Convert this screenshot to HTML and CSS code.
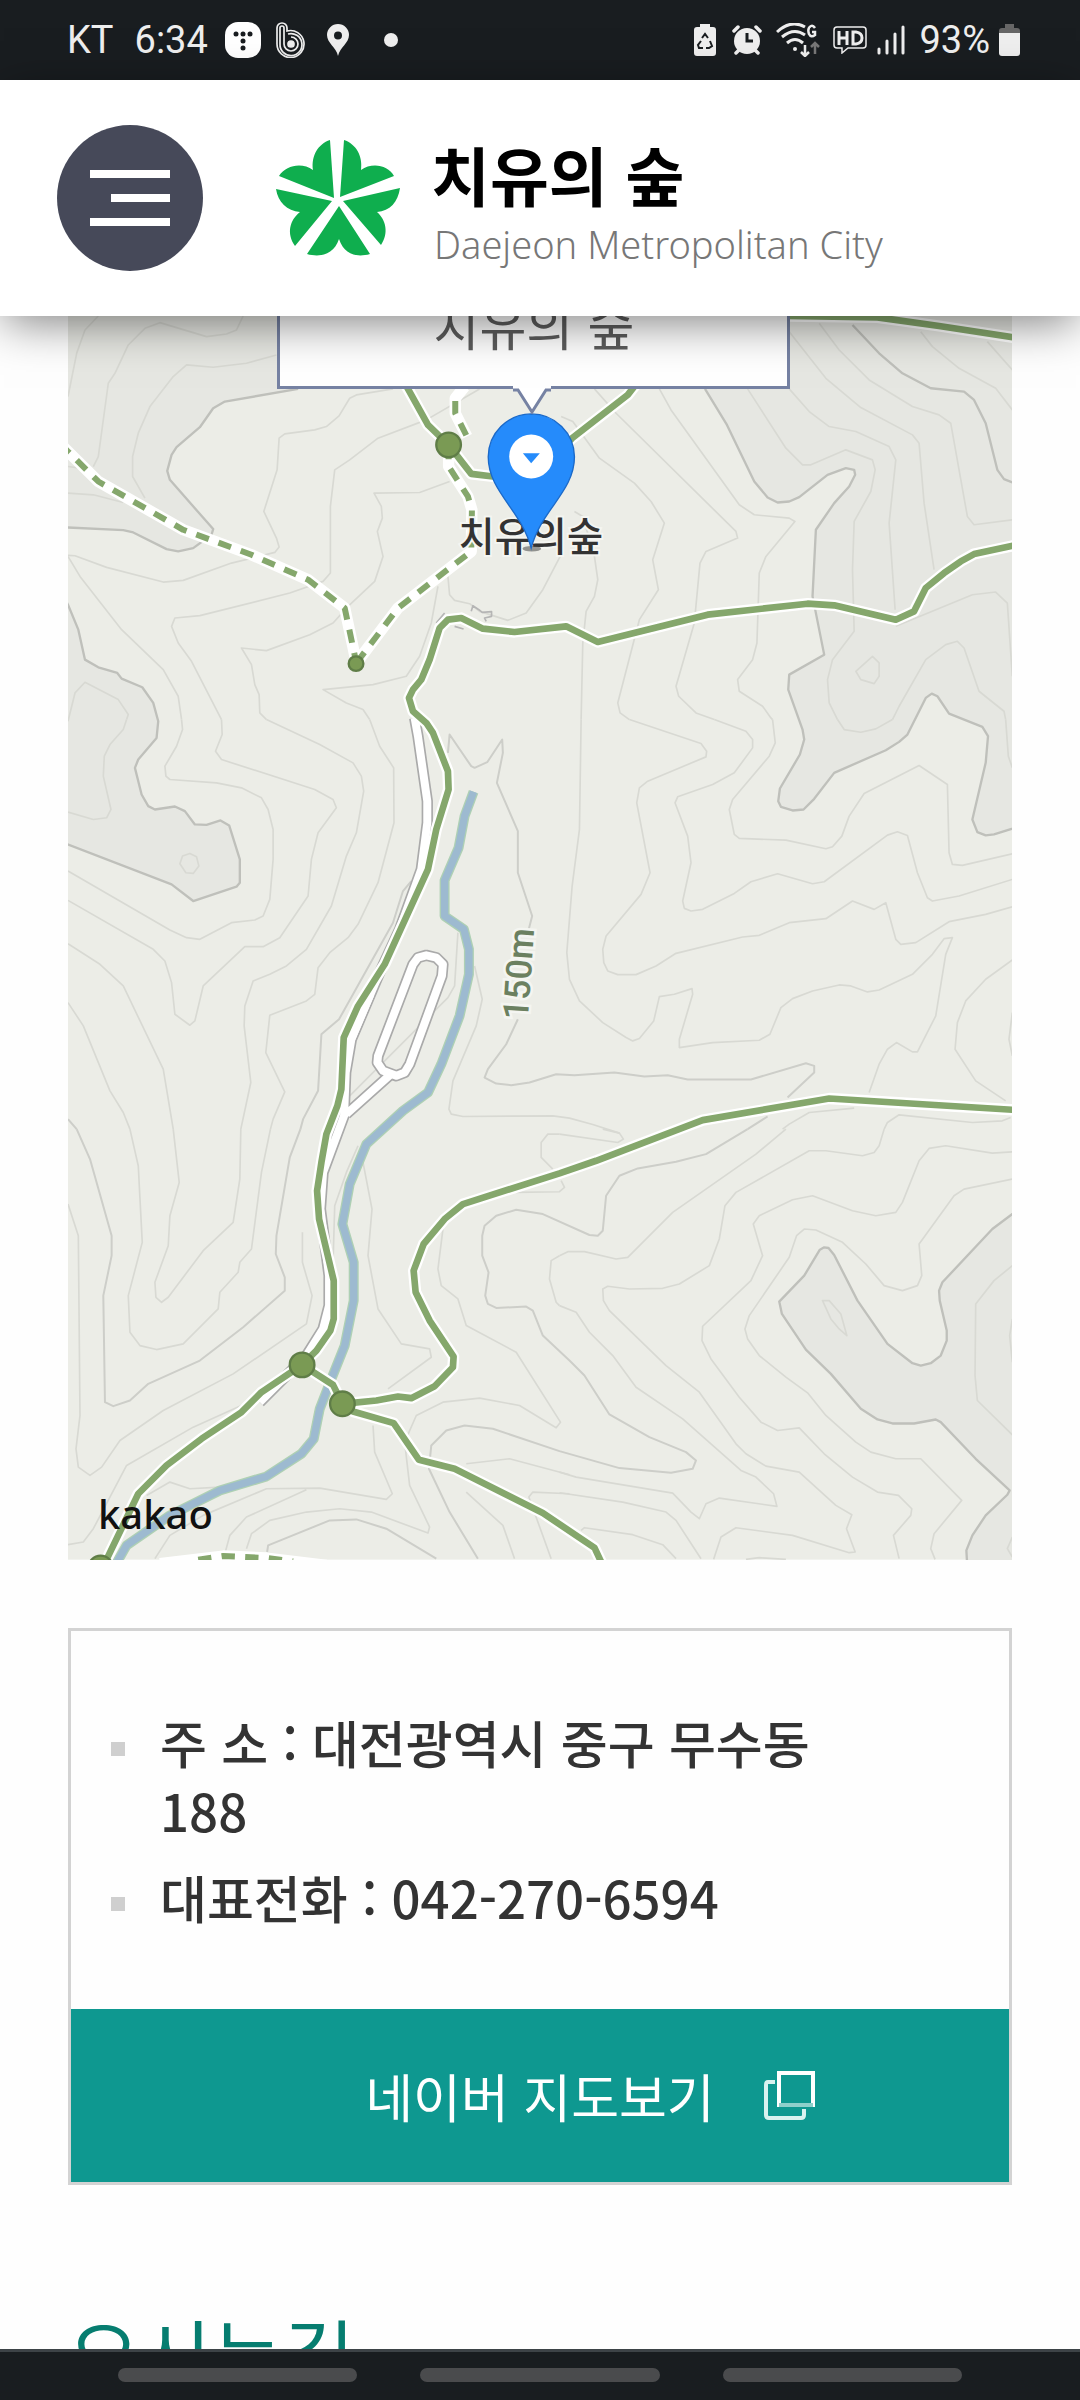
FILE: index.html
```html
<!DOCTYPE html>
<html lang="ko">
<head>
    <meta charset="UTF-8">
    <meta name="viewport" content="width=device-width, initial-scale=1.0">
    <title>치유의 숲</title>
    <link rel="stylesheet" href="styles.css">
</head>
<body>

    <!-- Status Bar -->
    <div class="status-bar">
        <div class="status-left">
            <span class="carrier">KT</span>
            <span class="clock">6:34</span>
            <svg class="icon-app" width="36" height="36" viewBox="0 0 36 36">
                <rect width="36" height="36" rx="13" fill="#fff"/>
                <g fill="#191d20"><circle cx="11" cy="12" r="2.5"/><circle cx="18" cy="12" r="2.5"/><circle cx="25" cy="12" r="2.5"/><circle cx="18" cy="19" r="2.5"/><circle cx="18" cy="26" r="2.5"/></g>
            </svg>
            <svg class="icon-band" width="30" height="36" viewBox="0 0 30 36" fill="none" stroke="#eee" stroke-width="1.7">
                <path d="M1 6a5 5 0 0 1 10 0v3a13.500 13.500 0 1 1-10 13z"/>
                <path d="M4 22V6a2 2 0 0 1 4 0v16a7 7 0 1 0 7-7"/>
                <path d="M4 22a11 11 0 1 0 8-10"/>
                <circle cx="15" cy="22" r="3" fill="#eee"/>
            </svg>
            <svg class="icon-place" width="22" height="32" viewBox="0 0 22 32">
                <path fill="#eee" fill-rule="evenodd" d="M11 0a11 11 0 0 0-11 11c0 8 9 12 11 21 2-9 11-13 11-21A11 11 0 0 0 11 0zm0 7.500a4 4 0 1 1 0 8 4 4 0 0 1 0-8z"/>
            </svg>
            <span class="dot"></span>
        </div>
        <div class="status-right">
            <svg width="22" height="32" viewBox="0 0 22 32">
                <path fill="#eee" d="M6 0h10v3h3q3 0 3 3v23q0 3-3 3H3q-3 0-3-3V6q0-3 3-3h3z"/>
                <path fill="none" stroke="#191d20" stroke-width="2" d="M8 14l3-4 3 4M16 17l2 5-3 2h-3M9 24H5l-1-3 3-4"/>
            </svg>
            <svg class="icon-alarm" width="30" height="30" viewBox="0 0 30 30">
                <g stroke="#eee" stroke-width="3.500" stroke-linecap="round"><path d="M2 6l4-4M28 6l-4-4M4 28l4-4M26 28l-4-4"/></g>
                <circle cx="15" cy="16" r="13" fill="#eee"/>
                <path d="M15 8v8h6" fill="none" stroke="#191d20" stroke-width="3"/>
            </svg>
            <svg class="icon-wifi" width="45" height="34" viewBox="0 0 45 34" fill="none" stroke="#eee" stroke-width="3">
                <path d="M1 9q14-13 28-5M6 14q12-10 23-2M11 20q8-7 16 0"/>
                <circle cx="19" cy="26" r="2" fill="#eee" stroke="none"/>
                <path stroke-width="2.500" d="M29 22v11M25 29l4 4 4-4M39 5q-2-3-4-2-4 2-2 8 2 4 6 1V9h-3"/>
                <path stroke="#777" stroke-width="2.500" d="M39 31V20M35 24l4-4 4 4"/>
            </svg>
            <svg class="icon-hd" width="34" height="28" viewBox="0 0 34 28" fill="none" stroke="#eee" stroke-width="1.500">
                <path d="M4 1h26q3 0 3 3v15q0 3-3 3H15l-6 5v-5H4q-3 0-3-3V4q0-3 3-3z"/>
                <path stroke-width="3" d="M6 5v14M14 5v14M6 12h8M20 6h3q6 1 6 6t-6 6h-3z"/>
            </svg>
            <svg class="icon-signal" width="28" height="30" viewBox="0 0 28 30" stroke="#eee" stroke-width="3" stroke-linecap="round">
                <path d="M2 24v4M10 16v12M18 9v19M26 2v26"/>
            </svg>
            <span class="percent">93%</span>
            <svg class="icon-battery" width="21" height="32" viewBox="0 0 21 32">
                <path fill="#666" d="M6 0h9v4h3q3 0 3 3v4H0V7q0-3 3-3h3z"/>
                <path fill="#eee" d="M0 9h21v20q0 3-3 3H3q-3 0-3-3z"/>
            </svg>
        </div>
    </div>

    <!-- Header -->
    <header class="header">
        <button class="menu-btn" aria-label="메뉴">
            <svg width="80" height="56" viewBox="0 0 80 56" fill="#fff"><path d="M0 0h80v8H0zM21 24h59v8H21zM0 48h80v8H0z"/></svg>
        </button>
        <a class="logo" href="#">
            <svg width="124" height="116" viewBox="0 0 124 116" fill="#0fae4e">
                <path d="M54 0C42 4 35 16 37 30C26 22 10 25 3 36L58 58z"/>
                <path d="M68 0C80 4 87 16 85 30C96 22 112 25 118 36L64 57z"/>
                <path d="M124 48C122 62 114 71 101 72C110 80 113 93 105 105L67 61z"/>
                <path d="M0 49C2 62 11 71 24 72C14 80 10 93 19 106L56 61z"/>
                <path d="M63 66L31 114C45 118 58 114 63 99C68 114 80 118 94 114z"/>
            </svg>
            <span class="logo-text">
                <strong>치유의 숲</strong>
                <small>Daejeon Metropolitan City</small>
            </span>
        </a>
    </header>

    <main class="content">

        <!-- Map Section -->
        <section class="map">
            <svg class="map-canvas" viewBox="0 0 2835 3735">
                <rect width="2835" height="3735" fill="#ecede7"/>

                <!-- high ground -->
                <g class="high">
                    <path transform="translate(-24 -18)" d="M0 0H715V237L495 275 460 295 420 352 350 412 335 435 322 483 330 510 460 658 455 675 400 715 355 725 320 718 220 668 190 661 0 652z"/>
                    <path transform="translate(-24 -18)" d="M0 840L24 885 55 960 75 1050 115 1073 172 1090 185 1107 247 1133 280 1180 295 1235 290 1285 235 1350 225 1375 245 1455 265 1490 285 1500 345 1491 375 1505 405 1545 440 1546 482 1533 508 1548 540 1650 540 1720 530 1732 400 1775 335 1725 0 1596z"/>
                    <path transform="translate(1476 -18)" d="M300 0L437 237 503 345 585 515 625 563 655 578 690 575 720 562 805 495 860 475 885 480 888 495 870 530 825 580 770 660 760 860 795 1035 690 1095 687 1140 730 1260 735 1290 722 1335 662 1437 657 1475 665 1492 700 1503 733 1500 765 1468 825 1390 980 1322 1020 1297 1045 1275 1100 1165 1118 1152 1135 1160 1170 1212 1270 1252 1287 1280 1280 1360 1240 1530 1255 1568 1280 1578 1305 1575 1400 1545V0z"/>
                    <path transform="translate(1476 2442)" d="M1400 225L1300 300 1150 460 1140 485 1142 515 1163 605 1163 635 1145 680 1115 703 1085 710 1060 703 985 645 895 515 825 378 808 357 795 355 782 362 735 440 660 518 668 555 740 662 815 735 905 840 955 872 1000 884 1065 884 1130 872 1145 880 1250 990 1352 1085 1345 1098 1280 1160 1240 1220 1222 1265 1225 1320H1400z"/>
                </g>

                <!-- contour lines, one group per tile -->
                <g class="contour">
                    <path transform="translate(-24 -18)" d="M24 260L50 130 75 60 115 18M100 470L115 440 145 220 165 190 205 105 255 55 300 38 440 80 500 72 530 60 550 18M255 565L218 500 218 440 235 370 270 290 340 200 380 165 460 172 560 160 650 135M24 550L100 555 190 578M24 470L60 475M24 737L45 738 140 773 310 817 370 812 515 760 645 728 658 712 650 685 612 605 652 480 658 385 675 372 765 360 800 350 838 318 870 265 890 255 1000 237M485 1230L395 1055 355 1000 335 950 345 925 420 918 690 850 790 815 812 790 812 590 825 480 870 450 955 385 1100 330 1260 237M620 1230L600 1210 598 1155 585 1125 575 1065 545 1015 620 1023 750 975 820 940 865 890 945 815 970 740 953 665 968 625 965 590 943 550 1080 548 1170 515M24 740L60 800 185 960 310 1080 355 1160 365 1230M930 1230L910 1200 860 1180 790 1140 940 1125 1040 1100 1080 1040 1115 940 1135 830M1165 800L1170 855 1185 872 1230 882 1260 905 1345 932 1400 910 1450 840 1510 725M24 1235L45 1150 75 1118 175 1170 205 1215 200 1230"/>
                    <path transform="translate(1476 -18)" d="M105 237L170 310 530 665 535 685 440 725 422 760 405 940 350 1130 358 1160 410 1210 465 1230M300 237L335 300 540 585 585 615 690 625 707 635 620 740 600 790 593 1000 580 1050 535 1110 540 1145 610 1190 635 1225 640 1230M5 320L40 335 120 445 225 520 275 575 315 640 280 750 297 840 240 930 175 1180 182 1210 210 1230M45 605L70 620 105 740 115 810 105 860 80 905 70 1000 65 1230M565 237L680 415 730 465 755 465 860 420 940 450 948 480 935 545 885 635 880 780 885 965 820 1050 805 1110 810 1180 835 1230M690 237L750 305 810 350 890 365 990 410 1010 450 990 640 1008 900M690 65L800 205 905 293 1060 375 1080 400 1095 580 1125 780M780 40L840 120 930 210 1060 290 1140 315 1175 340 1225 620 1245 645 1360 630M1085 65L1120 110 1200 175 1310 235 1360 300M1285 95L1360 180M1010 950L1240 855 1310 847 1345 880 1360 1100M1000 1230L1020 1190 1100 1050 1160 1005 1195 995 1215 1015 1260 1145 1335 1205 1340 1230M890 1085L940 1040 960 1060 960 1100 945 1122 905 1110z"/>
                    <path transform="translate(-24 1212)" d="M200 0L190 30 150 75 133 110 130 170 153 270 140 295 100 300 24 278M365 0L368 30 350 80 315 140 318 170 330 180 470 190 545 205 605 235 625 270 640 330 640 420 630 540 610 590 585 602 515 610 420 660 380 655 330 632 24 455M485 0L487 45 467 95 485 120 765 210 820 240 830 265 775 340 755 420 745 530 660 655 610 682 555 682 430 800 405 905 390 918 345 885 335 790 315 725 280 690 24 543M620 0L780 75 880 130 905 170 912 215 890 340 860 410 815 560 740 690 680 740 630 765 580 785 555 860 553 920 573 1090 543 1230M930 0L960 80 1002 145 1003 310 955 490 895 615 865 655 810 700 775 745 765 825 740 845 630 888 618 1000 675 1118 640 1200 632 1230M24 673L120 735 190 800 310 1050 340 1230M24 850L70 920 150 1115 190 1180 210 1230M360 433L368 410 390 402 410 412 417 440 400 462 378 460zM1195 640L1185 800 1165 835 870 1130M1245 740L1268 840 1250 920 1180 1085 1168 1170 1175 1185 1210 1192 1480 1190 1530 1197 1600 1216 1680 1242"/>
                    <path transform="translate(1476 1212)" d="M65 0L60 330 38 500 22 700 30 780 60 845 130 910 200 955 220 965 240 958 283 905 300 832 345 825 398 808 400 825 360 960 360 985 460 970 600 963 632 945 665 865 700 838 760 815 840 797 875 800 925 818 960 812 1060 765 1120 705 1155 658 1180 655 1160 705 1130 890 1075 998 1060 998 1012 970 985 990 960 1035 930 1120M210 0L425 72 442 95 440 112 265 185 240 205 232 250 272 460 245 525 140 650 130 690 133 730 145 755 175 766 230 766 290 740 350 702 550 653 600 648 690 610 800 598 880 545 945 570 980 550 1010 660 1025 675 1070 670 1170 607 1280 585 1360 562M465 0L560 35 580 60 580 85 525 160 460 195 355 232 347 250 385 350 395 430 370 545 375 567 395 575 430 570 525 522 575 487 655 463 760 493 795 487 985 347 1015 337 1045 348 1075 460 1105 535 1120 545 1200 530 1360 480M640 0L648 70 630 110 520 240 510 270 525 345 540 357 680 362 800 388 820 382 848 350 870 290 915 222 1080 138 1165 195 1170 400 1180 435 1210 438 1360 403M835 0L855 30 905 38 950 28 1000 0M1340 0L1348 110 1360 145M1360 722L1280 780 1220 845 1195 910 1188 990 1250 1085 1340 1145M1360 880L1350 960 1360 1010M885 1167L750 1180 690 1215 670 1230M975 1230L985 1210 1020 1187 1240 1210 1330 1205 1355 1195"/>
                    <path transform="translate(-24 2442)" d="M24 225L55 320 60 860 48 960 55 1015 90 1040 125 1015 180 935 310 845 520 735 740 585 757 500 728 400 728 310M210 0L235 110 247 340 205 500 210 610 240 650 290 662 370 645 475 540 480 490 535 430 540 400 575 360 605 130 632 0M340 0L358 160 330 260 325 350 285 460 288 505 305 520 325 505 430 365 520 280 540 150 543 0M24 1248L70 1240 100 1200 200 1010 400 895 600 805M260 1100L330 1060 390 1080 480 1075M285 1290L330 1220 430 1160 620 1080 780 1078 980 1112 998 1095 945 970 940 890M495 1275L510 1220 560 1165 740 1083M560 1260L575 1215 630 1175 740 1150 840 1140 935 1150 1105 1213 1110 1195 1050 1070 1035 940 1070 860 1150 820 1260 808 1380 830 1490 897 1503 880 1370 670 1220 590 1195 510 1145 470 1135 420 1150 300M910 100L937 240 925 380 955 540 1025 645 1110 660 1115 685 985 780M820 400L825 230 860 130 895 50M1500 530L1490 520 1470 450 1475 395 1500 380M1530 1038L1350 990 1220 1005M1530 1095L1420 1090 1408 1105 1475 1290M1220 1090L1330 1190 1365 1290M1505 155L1515 175 1500 188 1370 190M1500 15L1465 15 1445 40 1445 85 1480 120"/>
                    <path transform="translate(1476 2442)" d="M0 15L175 40 192 30 180 12 130 0M0 380L25 368 75 368 170 390 205 385 340 250 590 75 680 0M0 530L50 550 90 610 160 680 230 775 370 870 545 1025 590 1045 643 1095 653 1133 480 1108 440 1125 420 1170 395 1150 340 1093 50 1045 0 1030M0 1092L190 1120 320 1150 350 1175 425 1290M463 1292L485 1225 530 1197 700 1220 870 1272 888 1270 862 1200 878 1158 830 1130 720 1030 620 1012 560 975 530 945 420 790 320 710 150 545 132 515 130 480 145 472 210 480 310 478 360 465 450 410 480 330 497 230 530 190 750 65 800 65 910 80 945 70 960 50 975 0M1360 68L1300 72 1160 50 1110 58 1080 95 1030 220 1010 250 950 260 880 245 760 200 700 212 600 260 582 285 610 380 575 455 430 592 428 635 455 690 540 805 605 880 655 905 720 897 795 975 880 1045 955 1090 1018 1100 1058 1140 1055 1160 1003 1220 1020 1290M1360 150L1215 180 1185 200 1080 345 1088 440 1075 470 1030 485 975 470 920 405 850 340 770 303 735 300 712 320 690 385 570 560 557 600 565 630 600 680 680 745 745 792 800 860 890 940 935 970 1010 990 1085 990 1208 1115 1125 1215 1115 1260 1128 1292M1360 410L1305 455 1250 525 1248 740 1255 815 1360 918M1360 570L1352 620 1360 700M790 515L810 515 845 555 863 620 840 600 815 570zM65 1205L75 1197 220 1218 310 1248 350 1290M560 1292L600 1287 680 1292M1360 1225L1345 1260 1360 1285"/>
                </g>
                <g class="contour major">
                    <path transform="translate(-24 -18)" d="M715 237L495 275 460 295 420 352 350 412 335 435 322 483 330 510 460 658 455 675 400 715 355 725 320 718 220 668 190 661 0 652M0 840L24 885 55 960 75 1050 115 1073 172 1090 185 1107 247 1133 280 1180 295 1235 290 1285 235 1350 225 1375 245 1455 265 1490 285 1500 345 1491 375 1505 405 1545 440 1546 482 1533 508 1548 540 1650 540 1720 530 1732 400 1775 335 1725 0 1596"/>
                    <path transform="translate(1476 -18)" d="M437 237L503 345 585 515 625 563 655 578 690 575 720 562 805 495 860 475 885 480 888 495 870 530 825 580 770 660 760 860 795 1035 690 1095 687 1140 730 1260 735 1290 722 1335 662 1437 657 1475 665 1492 700 1503 733 1500 765 1468 825 1390 980 1322 1020 1297 1045 1275 1100 1165 1118 1152 1135 1160 1170 1212 1270 1252 1287 1280 1280 1360 1240 1530 1255 1568 1280 1578 1305 1575 1400 1545M880 45L960 130 1030 190 1115 235 1215 245 1245 270 1280 340 1315 480 1335 508 1360 518"/>
                    <path transform="translate(1476 2442)" d="M1400 225L1300 300 1150 460 1140 485 1142 515 1163 605 1163 635 1145 680 1115 703 1085 710 1060 703 985 645 895 515 825 378 808 357 795 355 782 362 735 440 660 518 668 555 740 662 815 735 905 840 955 872 1000 884 1065 884 1130 872 1145 880 1250 990 1352 1085 1345 1098 1280 1160 1240 1220 1222 1265 1225 1320"/>
                </g>
                <g class="contour middle">
                    <path transform="translate(-24 1212)" d="M1055 485L1030 515 1000 610 838 900 785 945 775 1115 730 1200 722 1230M1165 100L1170 45 1235 140 1245 145 1283 128 1328 60 1330 100 1312 190 1375 335 1375 460 1418 590 1405 640M1375 900L1340 975 1285 1050 1275 1075 1310 1093 1355 1098 1410 1090 1490 1065 1545 1068 1665 1060 1755 1072 1825 1068 1885 1081 2075 1081 2240 1032 2265 1040 2265 1060 2185 1135M24 1200L50 1230M2125 1192L2065 1230"/>
                    <path transform="translate(-24 2442)" d="M50 0L90 90 155 320 155 380 130 500 135 820 160 832 210 815 265 765 420 695 550 595 675 485 675 445 648 375 650 320 690 85 722 0M622 1270L625 1250 810 1175 890 1172 980 1200 1130 1290M2065 0L1940 75 1850 98 1735 118 1680 140 1640 200 1630 305 1615 320 1590 318 1450 255 1370 242 1310 260 1275 290 1268 320 1268 380 1287 430 1277 500 1285 525 1310 537 1400 533 1420 545 1450 620 1530 695 1575 740 1650 857 1770 925 1880 970 1910 995 1900 1020 1835 1032 1680 1018 1500 967 1300 900 1215 890 1160 905 1115 950 1108 1020 1170 1150 1255 1290"/>
                </g>

                <g transform="translate(-24 -18)" fill="none" stroke-linejoin="round">
                    <!-- stream -->
                    <g class="stream-edge">
                        <path d="M1242 1447L1215 1520 1197 1615 1155 1713V1820L1213 1860 1228 1920V1995L1200 2120 1145 2265 1105 2350 1030 2405 920 2505 870 2625 848 2745 882 2860V2975L855 3110 815 3210 780 3300 762 3390 725 3435 620 3503 480 3545 330 3620 200 3710 160 3780"/>
                    </g>
                    <g class="stream">
                        <path d="M1242 1447L1215 1520 1197 1615 1155 1713V1820L1213 1860 1228 1920V1995L1200 2120 1145 2265 1105 2350 1030 2405 920 2505 870 2625 848 2745 882 2860V2975L855 3110 815 3210 780 3300 762 3390 725 3435 620 3503 480 3545 330 3620 200 3710 160 3780"/>
                    </g>

                    <!-- service road and parking loop -->
                    <g class="road-edge">
                        <path d="M1065 1225L1075 1280 1103 1475 1103 1540 1085 1680 1020 1860 960 1990 875 2190 858 2290 853 2420 790 2590 782 2700 808 2900 808 2990 790 3060 740 3140 600 3280M990 2298L860 2415"/>
                        <path d="M1060 1965L1075 1945 1100 1938 1130 1945 1150 1965 1147 2000 1050 2265 1035 2290 1010 2300 970 2285 953 2260 955 2240z"/>
                    </g>
                    <g class="road">
                        <path d="M1065 1225L1075 1280 1103 1475 1103 1540 1085 1680 1020 1860 960 1990 875 2190 858 2290 853 2420 790 2590 782 2700 808 2900 808 2990 790 3060 740 3140 600 3280M990 2298L860 2415"/>
                        <path d="M870 2200L930 2060 900 2090 858 2190z" fill="#fff"/>
                        <path d="M1060 1965L1075 1945 1100 1938 1130 1945 1150 1965 1147 2000 1050 2265 1035 2290 1010 2300 970 2285 953 2260 955 2240z"/>
                    </g>
                    <path d="M1130 940L1155 910M1185 950L1212 958M1235 905L1240 888 1258 900 1268 908 1296 906V920L1275 925 1280 935" stroke="#b5b5b5" stroke-width="5"/>

                    <!-- footpaths -->
                    <g class="trail-edge">
                        <path d="M0 401L24 425 115 515 370 660 575 735 745 810 855 895 890 1060 1015 895 1235 725 1237 600 1225 560 1167 470V405M1215 230L1187 265V310L1222 380M300 3765L490 3742 620 3748 800 3770"/>
                    </g>
                    <g class="trail-dash">
                        <path d="M0 401L24 425 115 515 370 660 575 735 745 810 855 895 890 1060"/>
                        <path d="M890 1060L1015 895 1235 725 1237 600 1225 560 1167 470V405"/>
                        <path d="M1187 273V310L1222 380M415 3753L490 3742 620 3748 700 3758"/>
                    </g>
                    <g class="trail-edge">
                        <path d="M1030 210L1105 345 1167 405 1235 492 1300 500 1415 500 1538 385 1705 255 1740 210M2190 18L2455 22 2640 48 2880 85"/>
                        <path d="M2880 704L2745 733 2705 755 2655 790 2600 835 2565 905 2510 930 2325 887 2245 882 1945 915 1615 997 1520 950 1365 967 1270 957 1205 925 1165 930 1140 955 1110 1050 1085 1110 1060 1140 1048 1165 1060 1205 1100 1240 1120 1270 1165 1385 1167 1440 1130 1560 1105 1680 975 1965 895 2090 852 2185 845 2340 833 2390 800 2475 785 2560 772 2645 778 2730 822 2915V3030L812 3065 770 3125 727 3168 605 3250 545 3310 425 3390 320 3470 235 3555 140 3752 122 3790"/>
                        <path d="M727 3168L820 3228 848 3285 950 3275 1015 3263 1055 3268 1125 3232 1180 3175 1182 3143 1110 3035 1068 2950 1062 2885 1092 2805 1155 2730 1210 2685 1500 2593 1610 2555 1930 2433 2310 2368 2880 2403M848 3285L880 3308 1002 3343 1078 3453 1185 3480 1450 3613 1605 3717 1630 3770"/>
                    </g>
                    <g class="trail">
                        <path d="M1030 210L1105 345 1167 405 1235 492 1300 500 1415 500 1538 385 1705 255 1740 210M2190 18L2455 22 2640 48 2880 85"/>
                        <path d="M2880 704L2745 733 2705 755 2655 790 2600 835 2565 905 2510 930 2325 887 2245 882 1945 915 1615 997 1520 950 1365 967 1270 957 1205 925 1165 930 1140 955 1110 1050 1085 1110 1060 1140 1048 1165 1060 1205 1100 1240 1120 1270 1165 1385 1167 1440 1130 1560 1105 1680 975 1965 895 2090 852 2185 845 2340 833 2390 800 2475 785 2560 772 2645 778 2730 822 2915V3030L812 3065 770 3125 727 3168 605 3250 545 3310 425 3390 320 3470 235 3555 140 3752 122 3790"/>
                        <path d="M727 3168L820 3228 848 3285 950 3275 1015 3263 1055 3268 1125 3232 1180 3175 1182 3143 1110 3035 1068 2950 1062 2885 1092 2805 1155 2730 1210 2685 1500 2593 1610 2555 1930 2433 2310 2368 2880 2403M848 3285L880 3308 1002 3343 1078 3453 1185 3480 1450 3613 1605 3717 1630 3770"/>
                    </g>
                    <g class="junction">
                        <circle cx="1167" cy="405" r="37"/>
                        <circle cx="889" cy="1062" r="22"/>
                        <circle cx="727" cy="3168" r="37"/>
                        <circle cx="848" cy="3285" r="37"/>
                        <circle cx="122" cy="3778" r="37"/>
                    </g>
                </g>

                <g transform="translate(-24 -18)">
                    <text class="height-label" transform="translate(1405 2134) rotate(-86)">150m</text>
                    <text class="place-label" x="1414" y="724">치유의숲</text>

                    <!-- marker -->
                    <ellipse cx="1417" cy="717" rx="28" ry="8" fill="#555" opacity=".6"/>
                    <path d="M1415 312A130 130 0 0 0 1286 441C1286 545 1385 600 1415 715C1445 600 1545 545 1545 441A130 130 0 0 0 1415 312z" fill="#258bfb" stroke="#1b69c8" stroke-width="4"/>
                    <circle cx="1415" cy="440" r="66" fill="#fff"/>
                    <path d="M1390 430H1441L1415 460z" fill="#258bfb"/>
                </g>
            </svg>

            <div class="bubble">
                치유의 숲
                <svg class="bubble-tail" width="38" height="28" viewBox="0 0 38 28">
                    <path d="M0 0H38V4H34L19 27 4 4H0z" fill="#fff"/>
                    <path d="M0 4H5L19 26 33 4H38" fill="none" stroke="#7682a3" stroke-width="3"/>
                </svg>
            </div>
            <a class="kakao" href="#">kakao</a>
        </section>

        <!-- Address Section -->
        <section class="info-box">
            <ul class="info-list">
                <li>주 소 : 대전광역시 중구 무수동 188</li>
                <li>대표전화 : 042-270-6594</li>
            </ul>
            <a class="map-link" href="#">
                <span class="map-link-text">네이버 지도보기</span>
                <svg width="51" height="49" viewBox="0 0 51 49" fill="none" stroke="#fff" stroke-width="4">
                    <path d="M15 2h34v32H15z"/>
                    <path d="M15 34h34" stroke="#8fd0cb"/>
                    <path d="M11 11H4q-2 0-2 3v30q0 3 3 3h32q3 0 3-3v-6" stroke="#d8f2ef" stroke-width="4"/>
                </svg>
            </a>
        </section>

        <h2 class="section-title">오시는길</h2>
    </main>

    <!-- Navigation Bar -->
    <div class="nav-bar">
        <span></span>
        <span></span>
        <span></span>
    </div>

</body>
</html>
```
FILE: styles.css
```css
* {
    box-sizing: border-box;
}

body {
    display: flex;
    flex-direction: column;
    height: 100vh;
    margin: 0;
    overflow: hidden;
    background-color: #fefefe;
    color: #333;
    font-family: "Noto Sans CJK KR", "Noto Sans", sans-serif;
}

a {
    color: inherit;
    text-decoration: none;
}

svg {
    display: block;
    flex-shrink: 0;
}

/* Status Bar */
.status-bar {
    display: flex;
    flex-shrink: 0;
    justify-content: space-between;
    height: 80px;
    padding: 0 60px 0 67px;
    background-color: #191d20;
    color: #eee;
    font-family: Roboto, sans-serif;
    font-size: 38px;
}

.status-left,
.status-right {
    display: flex;
    align-items: center;
}

.clock {
    margin-left: 21px;
}

.icon-app {
    margin-left: 17px;
}

.icon-band {
    margin-left: 15px;
}

.icon-place {
    margin-left: 21px;
}

.dot {
    width: 14px;
    height: 14px;
    margin-left: 35px;
    border-radius: 50%;
    background-color: #eee;
}

.icon-alarm {
    margin-left: 16px;
}

.icon-wifi {
    margin-left: 14px;
}

.icon-hd {
    margin-left: 12px;
}

.icon-signal {
    margin-left: 10px;
}

.percent {
    margin-left: 14px;
}

.icon-battery {
    margin-left: 9px;
}

/* Header */
.header {
    position: relative;
    z-index: 2;
    display: flex;
    flex-shrink: 0;
    align-items: center;
    height: 236px;
    padding: 0 57px;
    background-color: #fff;
    box-shadow: 0 10px 44px -4px rgba(0, 0, 0, 0.5);
}

.menu-btn {
    display: flex;
    align-items: center;
    justify-content: center;
    width: 146px;
    height: 146px;
    padding: 0;
    border: 0;
    border-radius: 50%;
    background-color: #464959;
    cursor: pointer;
}

.logo {
    display: flex;
    align-items: center;
    margin-left: 73px;
}

.logo-text {
    display: flex;
    flex-direction: column;
    margin-left: 31px;
    padding-top: 15px;
}

.logo-text strong {
    color: #000;
    font-size: 64px;
    font-weight: 700;
    line-height: 76px;
}

.logo-text small {
    padding-left: 3px;
    color: #777;
    font-family: "Noto Sans", sans-serif;
    font-size: 38px;
    font-weight: 300;
    line-height: 66px;
}

.content {
    flex: 1;
    min-height: 0;
    padding: 0 68px;
    overflow: hidden;
}

/* Map */
.map {
    position: relative;
    overflow: hidden;
}

.map-canvas {
    width: 100%;
    height: auto;
}

.high {
    fill: #e6e7e2;
}

.contour {
    fill: none;
    stroke: #d8d9d3;
    stroke-width: 5;
    stroke-linejoin: round;
}

.contour.middle {
    stroke: #cdcec9;
    stroke-width: 6;
}

.contour.major {
    stroke: #bfc0bb;
    stroke-width: 7;
}

.stream-edge {
    stroke: #aed0b4;
    stroke-width: 30;
}

.stream {
    stroke: #9dbad0;
    stroke-width: 22;
}

.road-edge {
    stroke: #aaa;
    stroke-width: 34;
}

.road {
    stroke: #fff;
    stroke-width: 24;
}

.trail-edge {
    stroke: #fff;
    stroke-width: 34;
}

.trail {
    stroke: #85a76c;
    stroke-width: 20;
}

.trail-dash {
    stroke: #85a76c;
    stroke-width: 18;
    stroke-dasharray: 40 31;
}

.junction {
    fill: #7a9a54;
    stroke: #5f7d47;
    stroke-width: 7;
}

.height-label {
    fill: #6b8060;
    stroke: #f4f5f1;
    stroke-width: 16;
    paint-order: stroke;
    font-family: Roboto, sans-serif;
    font-size: 107px;
    font-weight: 500;
}

.place-label {
    fill: #333;
    stroke: #f4f5f1;
    stroke-width: 12;
    paint-order: stroke;
    font-size: 118px;
    font-weight: 500;
    text-anchor: middle;
}

.bubble {
    position: absolute;
    top: -57px;
    left: 209px;
    width: 513px;
    height: 130px;
    border: 3px solid #7682a3;
    background-color: #fff;
    color: #5c5c5c;
    font-size: 51px;
    font-weight: 400;
    line-height: 124px;
    text-align: center;
}

.bubble-tail {
    position: absolute;
    bottom: -28px;
    left: 50%;
    margin-left: -21px;
}

.kakao {
    position: absolute;
    bottom: 22px;
    left: 30px;
    color: #111;
    font-family: "Noto Sans", sans-serif;
    font-size: 40px;
    font-weight: 500;
    line-height: 48px;
}

/* Address */
.info-box {
    margin-top: 68px;
    border: 3px solid #d3d3d3;
}

.info-list {
    margin: 0;
    padding: 77px 120px 78px 40px;
    list-style: none;
    font-size: 51px;
    font-weight: 500;
    line-height: 68px;
    word-break: keep-all;
}

.info-list li {
    display: flex;
    gap: 35px;
}

.info-list li + li {
    margin-top: 19px;
}

.info-list li::before {
    content: "";
    flex-shrink: 0;
    width: 14px;
    height: 14px;
    margin-top: 34px;
    background-color: #cfcfcf;
}

.map-link {
    display: grid;
    grid-template-columns: 1fr auto 1fr;
    align-items: center;
    height: 173px;
    background-color: #0e9890;
    color: #fff;
    font-size: 52px;
}

.map-link-text {
    grid-column: 2;
}

.map-link svg {
    margin-left: 49px;
}

.section-title {
    margin: 111px 0 0;
    color: #067d70;
    font-size: 78px;
    font-weight: 400;
    line-height: 112px;
}

/* Navigation Bar */
.nav-bar {
    position: relative;
    display: flex;
    flex-shrink: 0;
    gap: 63px;
    height: 51px;
    padding: 16px 118px 0;
    border-top: 3px solid #3d4347;
    background-color: #191d20;
}

.nav-bar span {
    flex: 1;
    height: 14px;
    border-radius: 7px;
    background-color: #4a4b4d;
}
```
